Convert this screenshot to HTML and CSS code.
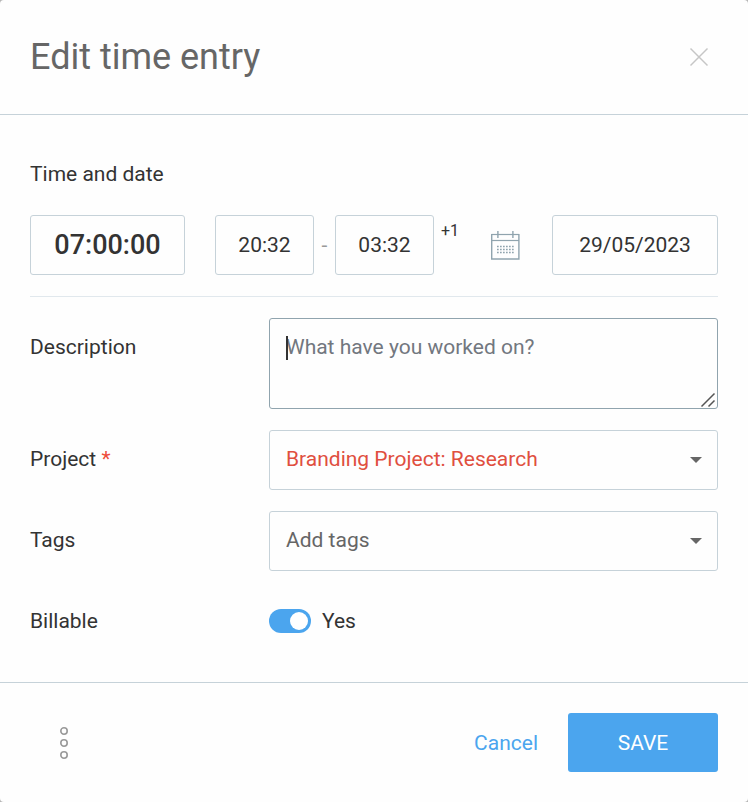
FILE: index.html
```
<!DOCTYPE html>
<html lang="en">
<head>
    <meta charset="UTF-8">
    <meta name="viewport" content="width=device-width, initial-scale=1.0">
    <title>Edit time entry</title>
    <link rel="stylesheet" href="styles.css">
</head>
<body>

<form class="modal">
    <header class="modal-header">
        <h1>Edit time entry</h1>
        <button type="button" class="close-btn" aria-label="Close">
            <svg width="20" height="20" viewBox="0 0 20 20">
                <path d="M1.5 1.5l17 17M18.5 1.5l-17 17" stroke="#c6c6c6" stroke-width="1.5" fill="none"/>
            </svg>
        </button>
    </header>

    <div class="modal-body">
        <h2>Time and date</h2>

        <div class="time-row">
            <input type="text" class="duration" value="07:00:00" aria-label="Duration">
            <input type="text" class="time" value="20:32" aria-label="Start time">
            <span class="dash">-</span>
            <input type="text" class="time" value="03:32" aria-label="End time">
            <span class="next-day">+1</span>
            <button type="button" class="calendar-btn" aria-label="Pick a date">
                <svg width="30" height="30" viewBox="0 0 30 30" fill="none" stroke="#90a4ae">
                    <path d="M1.5 4.5h27.5" stroke-width="1.2"/>
                    <path d="M1.5 10.5h27.5" stroke-width="1.2"/>
                    <path d="M1.7 4v25h27.2v-25" stroke-width="1.4"/>
                    <path d="M7.9 1v7M22.9 1v7" stroke-width="1.4"/>
                    <path d="M7 16.5h17.5M7 19.5h17.5M7 22.5h17.5" stroke-width="1.6" stroke-dasharray="1.7 1.3"/>
                </svg>
            </button>
            <input type="text" class="date" value="29/05/2023" aria-label="Date">
        </div>

        <div class="field">
            <label for="description">Description</label>
            <div class="control">
                <textarea id="description" placeholder="What have you worked on?"></textarea>
                <span class="caret"></span>
                <svg class="grip" width="16" height="16" viewBox="0 0 16 16">
                    <path d="M1.5 14.5l13-13M8.5 14.5l6-6" stroke="#555" stroke-width="1.5" fill="none"/>
                </svg>
            </div>
        </div>

        <div class="field">
            <label for="project">Project <span class="required">*</span></label>
            <div class="control">
                <select id="project" class="project">
                    <option>Branding Project: Research</option>
                </select>
                <svg class="arrow" width="12" height="6" viewBox="0 0 12 6"><path d="M0 0h12l-6 6z" fill="#666"/></svg>
            </div>
        </div>

        <div class="field">
            <label for="tags">Tags</label>
            <div class="control">
                <select id="tags">
                    <option>Add tags</option>
                </select>
                <svg class="arrow" width="12" height="6" viewBox="0 0 12 6"><path d="M0 0h12l-6 6z" fill="#666"/></svg>
            </div>
        </div>

        <div class="field">
            <label for="billable">Billable</label>
            <div class="control billable">
                <input type="checkbox" id="billable" class="switch" checked>
                <span>Yes</span>
            </div>
        </div>
    </div>

    <footer class="modal-footer">
        <button type="button" class="more-btn" aria-label="More options">
            <svg width="8" height="32" viewBox="0 0 8 32" fill="none" stroke="#999" stroke-width="1.6">
                <circle cx="4" cy="4" r="3.2"/>
                <circle cx="4" cy="16" r="3.2"/>
                <circle cx="4" cy="28" r="3.2"/>
            </svg>
        </button>
        <a href="#" class="cancel">Cancel</a>
        <button type="submit" class="save-btn">SAVE</button>
    </footer>
</form>

</body>
</html>
```
FILE: styles.css
```
* {
    box-sizing: border-box;
}

body {
    margin: 0;
    background-color: #b5b5b5;
    color: #333;
    font-family: Roboto, sans-serif;
    font-size: 21px;
    line-height: 24px;
}

.modal {
    display: flex;
    flex-direction: column;
    min-height: 100vh;
    background-color: #fefefe;
    border-radius: 4px;
}

.modal-header {
    display: flex;
    justify-content: space-between;
    align-items: center;
    padding: 36px 39px 36px 30px;
    border-bottom: 1px solid #c6d2d9;
}

h1 {
    margin: 0;
    color: #666;
    font-size: 36px;
    font-weight: normal;
    line-height: 42px;
}

h2 {
    margin: 0 0 29px;
    font-size: 21px;
    font-weight: normal;
    line-height: 24px;
}

button {
    padding: 0;
    border: none;
    background: none;
    font: inherit;
    cursor: pointer;
}

button svg {
    display: block;
}

.modal-body {
    flex: 1;
    padding: 47px 30px 28px;
}

input[type="text"],
textarea,
select {
    margin: 0;
    border: 1px solid #c6d2d9;
    border-radius: 3px;
    background-color: #fefefe;
    color: #333;
    font: inherit;
}

input[type="text"] {
    height: 60px;
    padding: 0;
    text-align: center;
}

.time-row {
    display: flex;
    align-items: center;
    padding-bottom: 21px;
    margin-bottom: 21px;
    border-bottom: 1px solid #e1e8ed;
}

.time-row .duration {
    width: 155px;
    margin-right: 30px;
    font-size: 27px;
    font-weight: 500;
}

.time-row .time {
    width: 99px;
}

.dash {
    width: 21px;
    color: #999;
    text-align: center;
}

.next-day {
    align-self: flex-start;
    margin-left: 7px;
    font-size: 16px;
    line-height: 32px;
}

.calendar-btn {
    margin-left: auto;
}

.time-row .date {
    width: 166px;
    margin-left: 32px;
}

.field {
    display: grid;
    grid-template-columns: 239px 1fr;
    margin-bottom: 21px;
}

.field label {
    padding-top: 17px;
}

.required {
    color: #ee4c3a;
}

.control {
    position: relative;
}

textarea {
    display: block;
    width: 100%;
    height: 91px;
    padding: 16px;
    border-color: #90a4ae;
    resize: none;
}

textarea::placeholder {
    color: #72777f;
}

/* text cursor over the empty textarea */
.caret {
    position: absolute;
    top: 18px;
    left: 17px;
    width: 2px;
    height: 24px;
    background-color: #333;
}

.grip {
    position: absolute;
    right: 2px;
    bottom: 1px;
}

select {
    display: block;
    width: 100%;
    height: 60px;
    padding: 0 40px 2px 16px;
    color: #666;
    appearance: none;
}

.project {
    color: #e04f3f;
}

.arrow {
    position: absolute;
    top: 27px;
    right: 16px;
    pointer-events: none;
}

.billable {
    display: flex;
    align-items: flex-end;
    gap: 11px;
}

.switch {
    width: 42px;
    height: 24px;
    margin: 0;
    padding: 3px;
    border-radius: 12px;
    background-color: #c6d2d9;
    appearance: none;
}

.switch::before {
    content: "";
    display: block;
    width: 18px;
    height: 18px;
    border-radius: 50%;
    background-color: #fff;
}

.switch:checked {
    background-color: #4ba5ee;
}

.switch:checked::before {
    margin-left: auto;
}

.modal-footer {
    display: flex;
    align-items: center;
    padding: 30px;
    border-top: 1px solid #c6d2d9;
}

.more-btn {
    margin: 0 auto 0 30px;
}

.cancel {
    margin-right: 30px;
    color: #4ba5ee;
    text-decoration: none;
}

.save-btn {
    width: 150px;
    height: 59px;
    border-radius: 3px;
    background-color: #4ba5ee;
    color: #fff;
}
```
